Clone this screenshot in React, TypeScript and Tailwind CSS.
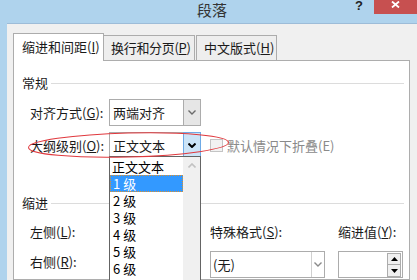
import * as React from 'react';

const Chevron = ({ color = '#6b6b6b', bold = false }: { color?: string; bold?: boolean }) => (
  <svg width="8" height="5" viewBox="0 0 8 5">
    <path d="M0.5 0.5 L4 4 L7.5 0.5" fill="none" stroke={color} strokeWidth={bold ? 2 : 1.4} />
  </svg>
);

const Select = ({ text, focused = false }: { text: string; focused?: boolean }) => (
  <div className="flex h-full w-[92px] border border-[#acacac] bg-white">
    <div className="flex flex-1 items-center pl-[3px]">{text}</div>
    <div
      className={
        focused
          ? 'flex w-[18px] items-center justify-center border border-[#6eaae6] bg-[#cce4f7] -my-px -mr-px'
          : 'flex w-[17px] items-center justify-center border-l border-[#acacac] bg-[#e6e6e6]'
      }
    >
      <Chevron color={focused ? '#000' : '#6b6b6b'} bold={focused} />
    </div>
  </div>
);

const SectionHead = ({ title, className }: { title: string; className: string }) => (
  <div className={`flex h-[18px] items-center pl-[8px] pr-[5px] ${className}`}>
    <span>{title}</span>
    <div className="ml-[3px] flex-1 border-t border-[#dcdcdc]" />
  </div>
);

const levels = ['1 级', '2 级', '3 级', '4 级', '5 级', '6 级'];

export default function App() {
  return (
    <div className="relative flex h-[280px] w-[417px] flex-col overflow-hidden whitespace-nowrap bg-[#afd3ed] font-['Noto_Sans_CJK_SC',sans-serif] text-[13px] leading-[18px] text-[#1a1a1a]">
      {/* title bar */}
      <div className="flex h-[23px] shrink-0 items-start">
        <div className="flex-1" />
        <div className="pl-[7px] text-[15px] leading-[20px] text-[#333]">段落</div>
        <div className="flex flex-1 justify-end">
          <span className="mr-[11px] font-['Liberation_Sans',sans-serif] text-[13px] font-bold leading-[11px] text-[#222]">?</span>
          <div className="flex h-[14px] w-[43px] justify-center bg-[#c75050] pt-[1px]">
            <svg width="9" height="7" viewBox="0 0 9 7">
              <path d="M1 0.5 L8 6.5 M8 0.5 L1 6.5" stroke="#fff" strokeWidth="1.8" />
            </svg>
          </div>
        </div>
      </div>

      {/* dialog body */}
      <div className="ml-[7px] flex flex-1 flex-col border-t border-[#9dbcd8] bg-[#f0f0f0] pl-[6px] pt-[9px]">
        {/* tabs */}
        <div className="relative z-10 -mb-px flex h-[28px] items-end">
          <div className="flex h-[28px] w-[91px] items-center border border-b-0 border-[#acacac] bg-white pb-[2px] pl-[8px]">
            缩进和间距(<u>I</u>)
          </div>
          <div className="mb-px flex h-[25px] w-[91px] items-center border border-b-0 border-l-0 border-[#acacac] bg-[#eeeeee] pl-[7px] tracking-[-0.3px]">
            换行和分页(<u>P</u>)
          </div>
          <div className="mb-px ml-px flex h-[25px] w-[81px] items-center border border-b-0 border-[#acacac] bg-[#eeeeee] pl-[7px]">
            中文版式(<u>H</u>)
          </div>
        </div>

        {/* panel */}
        <div className="relative flex w-[397px] flex-1 flex-col border border-[#adadad] bg-white">
          <SectionHead title="常规" className="mt-[13px]" />

          <div className="mt-[7px] flex h-[27px] items-center pl-[16px]">
            <span className="w-[79px]">
              对齐方式(<u>G</u>):
            </span>
            <Select text="两端对齐" />
          </div>

          <div className="mt-[6px] flex h-[27px] items-center pl-[16px]">
            <span className="w-[79px]">
              大纲级别(<u>O</u>):
            </span>
            <Select text="正文文本" focused />
            <div className="ml-[9px] h-[13px] w-[13px] border border-[#c4c4c4] bg-[#f2f2f2]" />
            <span className="ml-[4px] text-[#8a8a8a]">默认情况下折叠(E)</span>
          </div>

          <SectionHead title="缩进" className="mt-[35px]" />

          <div className="mt-[11px] flex">
            <div className="flex w-[196px] flex-col pl-[16px]">
              <span>
                左侧(<u>L</u>):
              </span>
              <span className="mt-[12px]">
                右侧(<u>R</u>):
              </span>
            </div>
            <div className="flex w-[128px] flex-col">
              <span>
                特殊格式(<u>S</u>):
              </span>
              <div className="mt-[10px] flex h-[27px] w-[115px] border border-[#acacac] bg-white">
                <div className="flex flex-1 items-center pl-[2px]">(无)</div>
                <div className="flex w-[13px] items-center justify-center border-l border-[#d0d0d0]">
                  <Chevron color="#8a8a8a" />
                </div>
              </div>
            </div>
            <div className="flex flex-col">
              <span>
                缩进值(<u>Y</u>):
              </span>
              <div className="mt-[10px] flex h-[27px] w-[65px] justify-end border border-[#acacac] bg-white pr-px pt-px">
                <div className="flex w-[14px] flex-col">
                  <div className="flex h-[12px] items-center justify-center border border-[#acacac] bg-[#f0f0f0]">
                    <svg width="7" height="4" viewBox="0 0 7 4">
                      <path d="M0 4 L3.5 0 L7 4 Z" fill="#000" />
                    </svg>
                  </div>
                  <div className="flex h-[12px] items-center justify-center border border-t-0 border-[#acacac] bg-[#f0f0f0]">
                    <svg width="7" height="4" viewBox="0 0 7 4">
                      <path d="M0 0 L3.5 4 L7 0 Z" fill="#000" />
                    </svg>
                  </div>
                </div>
              </div>
            </div>
          </div>

          {/* open dropdown list */}
          <div className="absolute left-[95px] top-[95px] z-20 flex h-[140px] w-[92px] border border-[#646464] bg-white leading-[15px]">
            <div className="flex w-[73px] flex-col pt-[1px]">
              <div className="flex h-[17px] items-center pl-[2px] text-black">正文文本</div>
              {levels.map((l, i) => (
                <div
                  key={l}
                  className={
                    i === 0
                      ? 'flex h-[17px] items-center border border-dotted border-[#e0902a] bg-[#3399ff] pl-[2px] text-white'
                      : 'flex h-[17px] items-center pl-[3px] text-black'
                  }
                >
                  {l}
                </div>
              ))}
            </div>
            <div className="flex w-[17px] justify-center bg-[#f0f0f0] pt-[6px]">
              <svg width="8" height="5" viewBox="0 0 8 5">
                <path d="M0.5 4.5 L4 1 L7.5 4.5" fill="none" stroke="#c2c2c2" strokeWidth="1.6" />
              </svg>
            </div>
          </div>
        </div>
      </div>

      {/* red annotation ellipse */}
      <svg className="pointer-events-none absolute left-0 top-0 z-30" width="417" height="280">
        <ellipse cx="128.5" cy="145" rx="100" ry="12" transform="rotate(-1.5 128.5 145)" fill="none" stroke="#e0393e" strokeWidth="1" />
      </svg>
    </div>
  );
}
